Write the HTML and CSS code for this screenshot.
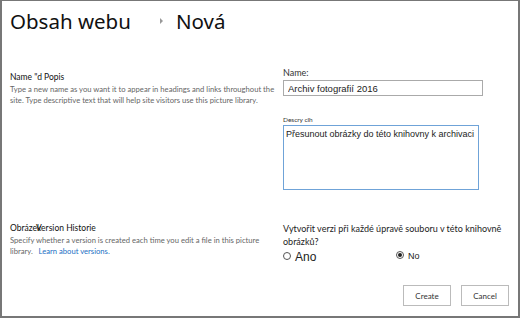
FILE: index.html
```html
<!DOCTYPE html>
<html lang="cs">
<head>
  <meta charset="UTF-8">
  <meta name="viewport" content="width=device-width, initial-scale=1.0">
  <link rel="stylesheet" href="styles.css">
</head>
<body>
  <div class="dialog">
    <!-- Titre -->
    <div class="title-bar">
      <span class="crumb">Obsah webu</span>
      <span class="chevron"></span>
      <span class="crumb">Nová</span>
    </div>

    <!-- Nom et description -->
    <div class="section section-name">
      <div class="section-info">
        <div class="section-title">Name "d Popis</div>
        <p class="section-text">Type a new name as you want it to appear in headings and links throughout the site. Type descriptive text that will help site visitors use this picture library.</p>
      </div>
      <div class="section-fields">
        <label class="field-label" for="name">Name:</label>
        <input class="text-input" id="name" value="Archiv fotografií 2016">
        <label class="field-label small" for="desc">Descry clh</label>
        <textarea class="text-area" id="desc" wrap="off">Přesunout obrázky do této knihovny k archivaci</textarea>
      </div>
    </div>

    <!-- Historique des versions -->
    <div class="section section-version">
      <div class="section-info">
        <div class="section-title">Obrázek<span class="overlap">Version Historie</span></div>
        <p class="section-text">Specify whether a version is created each time you edit a file in this picture library. &nbsp; <a class="info-link" href="#">Learn about versions.</a></p>
      </div>
      <div class="section-fields">
        <div class="question">Vytvořit verzi při každé úpravě souboru v této knihovně obrázků?</div>
        <div class="radio-row">
          <label class="radio radio-big"><span class="dot"></span>Ano</label>
          <label class="radio"><span class="dot checked"></span>No</label>
        </div>
      </div>
    </div>

    <!-- Boutons -->
    <div class="buttons">
      <button class="btn">Create</button>
      <button class="btn">Cancel</button>
    </div>
  </div>
</body>
</html>
```

FILE: styles.css
```css
body, html {
  margin: 0;
  padding: 0;
}

body {
  font-family: Lato, "Noto Sans", sans-serif;
  color: #222;
  background: #fff;
}

.dialog {
  width: 520px;
  height: 318px;
  box-sizing: border-box;
  border: 2px solid #777;
  border-top-width: 1px;
  padding: 0 8px 0 8px;
  display: flex;
  flex-direction: column;
}

.title-bar {
  display: flex;
  align-items: center;
  height: 38px;
  margin-top: 1px;
  font-family: "Noto Sans", sans-serif;
  font-size: 20.5px;
  color: #111;
}

.chevron {
  width: 0;
  height: 0;
  border-left: 3px solid #999;
  border-top: 3px solid transparent;
  border-bottom: 3px solid transparent;
  margin: 0 13px 0 29px;
}

.section {
  display: flex;
}

.section-name {
  margin-top: 32px;
  height: 125px;
}

.section-info {
  width: 273px;
}

.section-title {
  font-size: 8.5px;
  color: #111;
  position: relative;
  height: 11px;
}

.overlap {
  position: absolute;
  left: 26px;
  top: 0;
}

.section-text {
  margin: 1px 0 0 0;
  font-size: 7.65px;
  line-height: 11px;
  color: #666;
  width: 268px;
}

.info-link {
  color: #1a6fc4;
  text-decoration: none;
}

.section-fields {
  width: 226px;
  display: flex;
  flex-direction: column;
}

.field-label {
  font-size: 9px;
  line-height: 10px;
  color: #333;
  margin-top: -4px;
}

.field-label.small {
  font-size: 6.5px;
  margin-top: 19px;
  line-height: 10px;
}

.text-input {
  width: 200px;
  height: 16px;
  box-sizing: border-box;
  border: 1px solid #aaa;
  padding: 0 4px;
  margin-top: 2px;
  font-family: "Liberation Sans", Arial, sans-serif;
  font-size: 9.5px;
  color: #222;
}

.text-area {
  width: 196px;
  height: 65px;
  box-sizing: border-box;
  border: 1px solid #6fa3d8;
  padding: 3px 2px;
  margin-top: 0;
  resize: none;
  overflow: hidden;
  font-family: "Liberation Sans", Arial, sans-serif;
  font-size: 9px;
  line-height: 11px;
  color: #222;
}

.section-version {
  margin-top: 26px;
  height: 60px;
}

.question {
  font-size: 9px;
  line-height: 13px;
  color: #222;
  margin-top: -1px;
}

.radio-row {
  display: flex;
}

.radio {
  display: flex;
  align-items: center;
  font-family: "Liberation Sans", Arial, sans-serif;
  font-size: 9px;
  width: 131px;
  color: #222;
}

.radio-big {
  font-size: 12px;
  padding-top: 2px;
}

.dot {
  width: 8px;
  height: 8px;
  box-sizing: border-box;
  border: 1px solid #555;
  border-radius: 50%;
  margin-right: 4px;
  position: relative;
  top: -1px;
}

.dot.checked::after {
  content: "";
  position: absolute;
  left: 1px;
  top: 1px;
  width: 4px;
  height: 4px;
  border-radius: 50%;
  background: #222;
}

.buttons {
  display: flex;
  justify-content: flex-end;
  gap: 10px;
  margin-top: 2px;
  padding-right: 1px;
}

.btn {
  width: 48px;
  height: 21px;
  background: #fff;
  border: 1px solid #bbb;
  font-family: Lato, sans-serif;
  font-size: 8px;
  color: #333;
  padding: 0;
}
```
